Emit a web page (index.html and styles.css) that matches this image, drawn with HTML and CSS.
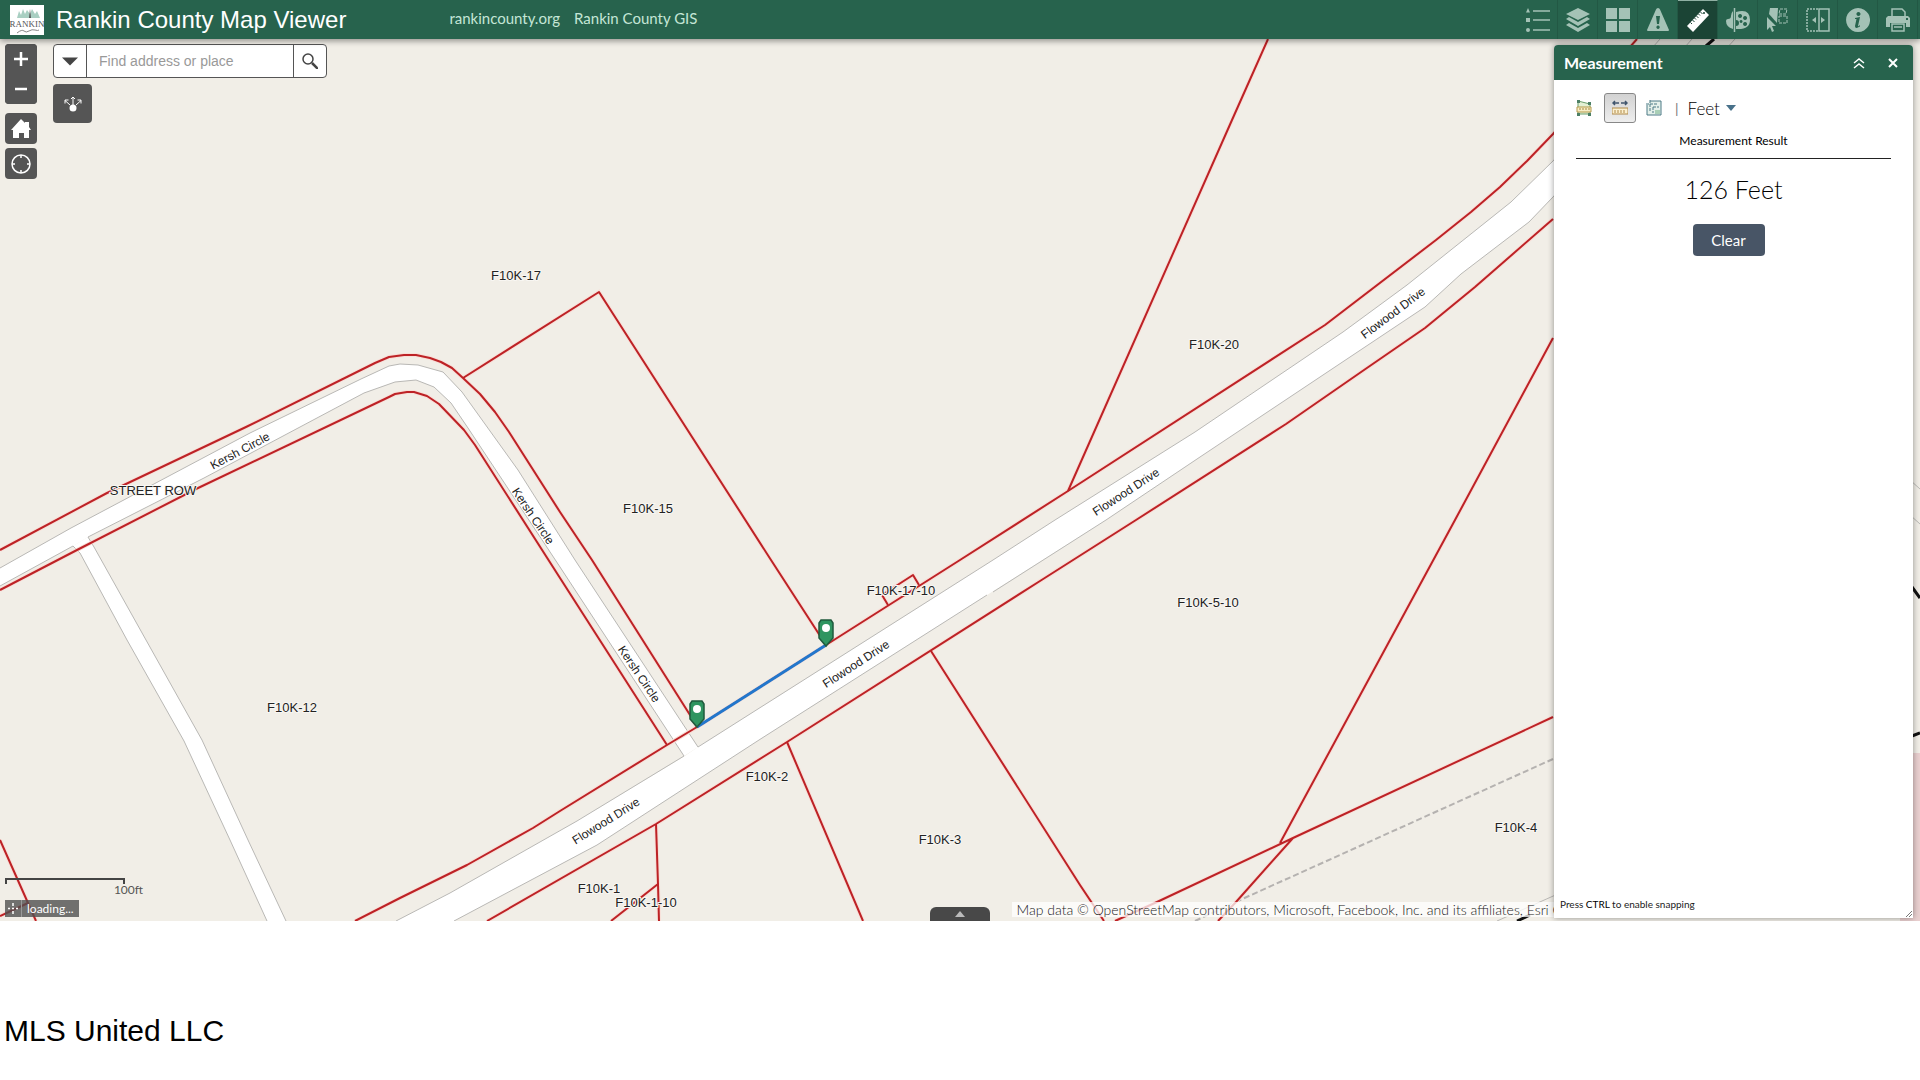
FILE: index.html
```html
<!DOCTYPE html>
<html lang="en">
<head>
<meta charset="utf-8">
<meta name="viewport" content="width=device-width, initial-scale=1">
<title>Rankin County Map Viewer</title>
<link rel="stylesheet" href="styles.css">
</head>
<body>
<header class="topbar">
  <svg class="logo" viewBox="0 0 34 30" aria-hidden="true">
    <rect width="34" height="30" fill="#fff"/>
    <path d="M7 13l2-7 2 4 2-6 2 5 2-4 3 4 2-5 3 5 2-3 3 7z" fill="#a9cfc2"/>
    <path d="M19 13l1-9 1 9z" fill="#555"/>
    <text x="17" y="22" class="logo-text">RANKIN</text>
    <path d="M7 28q5-4 7-2t5 0 6-1 4 0" fill="none" stroke="#888" stroke-width="1"/>
  </svg>
  <h1 class="title">Rankin County Map Viewer</h1>
  <nav class="links">
    <a href="#org">rankincounty.org</a>
    <a href="#gis">Rankin County GIS</a>
  </nav>
  <div class="widgets">
    <button class="widget" type="button" aria-label="Legend"><svg viewBox="0 0 24 24"><path d="M0 4.500L2 0l2 4.500zM0 10h4v4H0z" fill="currentColor"/><circle cx="2" cy="22" r="2" fill="currentColor"/><path d="M7 3h17M7 12h17M7 22h17" stroke="currentColor" stroke-width="1.500"/></svg></button>
    <button class="widget" type="button" aria-label="Layers"><svg viewBox="0 0 24 24"><path d="M12 0l12 6-12 6L0 6z" fill="currentColor"/><path d="M0 11l3-2 9 5 9-5 3 2-12 7zM0 17l3-2 9 5 9-5 3 2-12 7z" fill="currentColor"/></svg></button>
    <button class="widget" type="button" aria-label="Basemap gallery"><svg viewBox="0 0 24 24"><path d="M0 0h11v11H0zM13 0h11v11H13zM0 13h11v11H0zM13 13h11v11H13z" fill="currentColor"/></svg></button>
    <button class="widget" type="button" aria-label="Report"><svg viewBox="0 0 24 24"><path fill-rule="evenodd" d="M12 0q1.500 0 2 1.500L23 22q0 1-1 1H2q-1 0-1-1L10 1.500Q10.500 0 12 0zM10 8l1 8h2l1-8zM12 17.500a1.700 1.700 0 1 0 .1 0z" fill="currentColor"/></svg></button>
    <button class="widget active" type="button" aria-label="Measurement"><svg viewBox="0 0 24 24"><path d="M17 1l6 6L7 24l-6-6z" fill="currentColor"/><path d="M14.500 4l2 2M12.500 6l1.500 1.500M10.500 8l2 2M8.500 10l1.500 1.500M6.500 12l2 2M4.500 14.500L6 16" stroke="#1b4435" stroke-width="1"/><circle cx="18" cy="5" r="1" fill="#1b4435"/></svg></button>
    <button class="widget" type="button" aria-label="Draw"><svg viewBox="0 0 24 24"><path d="M7 3v18Q0 19 0 13q0-2 2-2 3 0 3-3 0-3 2-5z" fill="currentColor"/><path d="M8.500 0v24" stroke="currentColor" stroke-width="1.500"/><path fill-rule="evenodd" d="M10 4q14-4 14 8 0 10-14 9v-3q3 0 3-3t-3-3zM14 6a2 2 0 1 0 .1 0zM19 8a2 2 0 1 0 .1 0zM19 14a2 2 0 1 0 .1 0zM15 12a1.500 1.500 0 1 0 .1 0z" fill="currentColor"/></svg></button>
    <button class="widget" type="button" aria-label="Select"><svg viewBox="0 0 24 24"><path d="M4 0h8l-1 15-8-9z" fill="currentColor"/><path d="M14 1h7l-1 5h-7zM13 8h8v7h-8z" fill="none" stroke="currentColor" stroke-width="1" stroke-dasharray="3 1"/><path d="M1 9v13l3-3 2 5 2-1-2-5h4z" fill="currentColor"/></svg></button>
    <button class="widget" type="button" aria-label="Swipe"><svg viewBox="0 0 24 24"><path d="M12 1H1v22h11" fill="none" stroke="currentColor" stroke-width="1.500" stroke-dasharray="2 1"/><path d="M13 1h10v22H13z" fill="none" stroke="currentColor" stroke-width="1.500"/><path d="M6 12l4-3v6zM19 12l-4-3v6z" fill="currentColor"/></svg></button>
    <button class="widget" type="button" aria-label="About"><svg viewBox="0 0 24 24"><path fill-rule="evenodd" d="M12 0a12 12 0 1 0 .1 0zM12.500 4a2 2 0 1 1-.1 0zM9 10l5-1-2 9q0 1 2-1v1.500q-5 3-5-.5l1.500-7H9z" fill="currentColor"/></svg></button>
    <button class="widget" type="button" aria-label="Print"><svg viewBox="0 0 24 24"><path d="M6 9V1h10l3 3v5" fill="none" stroke="currentColor" stroke-width="1.500"/><path fill-rule="evenodd" d="M2 8h20l2 2v9h-4v-4H4v4H0v-9zM20 10v2h2v-2z" fill="currentColor"/><path d="M6 16h12v7H6zM8 19h8" fill="none" stroke="currentColor" stroke-width="1.500"/></svg></button>
  </div>
</header>

<main class="map">
  <svg class="canvas" viewBox="0 39 1920 882" role="img" aria-label="Parcel map">
    <defs>
      <g id="parcels">
        <path d="M0 550L107 493 246 427 375 363 389 357 404 355 416 355 430 358 441 362 452 368 463 378 480 394 495 412 509 432 560 512 592 560 690 715 697 727"/>
        <path d="M0 590L77 550 196 489 389 397 395 394 407 392 414 392 427 396 439 404 464 430 475 445 560 578 667 745"/>
        <path d="M463 378L599 292 771 560 826 645"/>
        <path d="M355 921L400 898 467 865 533 828 560 811 667 745 697 727 826 645 960 560 1068 491 1325 325 1436 240 1471 212 1500 187 1527 161 1553 134 1637 39"/>
        <path d="M487 921L656 824 787 742 1040 581 1136 520 1286 424 1364 370 1425 328 1475 287 1553 219"/>
        <path d="M1068 491L1232 120 1268 39M888 605L882 595 913 575 919 585"/>
        <path d="M931 651L1080 885 1104 921M787 742L863 921M656 824L658 884 659 921M658 884L611 921"/>
        <path d="M1553 338L1455 520 1390 640 1280 843M1553 717L1293 838 1157 902 1115 921M1293 838L1236 902 1218 921"/>
        <path d="M0 840L28 903 36 921M0 916L28 903"/>
      </g>
    </defs>
    <rect y="39" width="1920" height="882" fill="#f1eee7"/>
    <rect x="1900" y="753" width="20" height="168" fill="#e9cfcf"/>
    <g class="road-fill">
      <path d="M73 546L80 553 127 640 184 741 230 840 267 921H286L248 840 202 740 146 640 94 547 88 537z"/>
      <path d="M0 568L71 528 250 433 361 379 389 366 400 364 418 365 443 372 462 392 518 470 575 560 698 747 684 756 560 567 468 428 451 403 434 387 416 380 395 382 364 393 204 478 88 537 73 546 0 586z"/>
      <path d="M396 921L450 893 577 821 685 756 698 747 993 560 1055 520 1195 432 1343 332 1407 285 1511 202 1553 161 1660 45 1690 45 1553 197 1529 222 1461 274 1425 307 1200 457 1106 520 987 595 759 740 597 845 454 921z"/>
    </g>
    <g class="road-edge">
      <path d="M0 568L71 528 250 433 361 379 389 366 400 364 418 365 443 372 462 392 518 470 575 560 698 747 993 560 1055 520 1195 432 1343 332 1407 285 1511 202 1553 161 1660 39"/>
      <path d="M0 586L73 546M88 537L204 478 364 393 395 382 416 380 434 387 451 403 468 428 560 567 684 756 577 821 450 893 396 921"/>
      <path d="M454 921L597 845 759 740 987 595M993 592L1106 520 1200 457 1425 307 1461 274 1529 222 1553 197 1692 39"/>
      <path d="M73 546L80 553 127 640 184 741 230 840 267 921M88 537L94 547 146 640 202 740 248 840 286 921"/>
      <path d="M1497 921L1560 893M1725 50L1735 39M1910 480L1920 489M1910 515L1920 524"/>
    </g>
    <path class="trail" d="M1553 759L1240 900 1195 921"/>
    <use href="#parcels" class="halo"/>
    <use href="#parcels" class="line"/>
    <path d="M1517 921L1530 915M1706 46L1714 39M1912 587L1920 598M1912 736L1920 733" stroke="#111" stroke-width="3"/>
    <g class="parcel-label">
      <text x="516" y="280">F10K-17</text>
      <text x="1214" y="349">F10K-20</text>
      <text x="648" y="513">F10K-15</text>
      <text x="901" y="595">F10K-17-10</text>
      <text x="1208" y="607">F10K-5-10</text>
      <text x="292" y="712">F10K-12</text>
      <text x="767" y="781">F10K-2</text>
      <text x="940" y="844">F10K-3</text>
      <text x="1516" y="832">F10K-4</text>
      <text x="599" y="893">F10K-1</text>
      <text x="646" y="907">F10K-1-10</text>
      <text x="153" y="495">STREET ROW</text>
    </g>
    <g class="street-label">
      <text transform="translate(240 451) rotate(-28)" y="4">Kersh Circle</text>
      <text transform="translate(533 516) rotate(56)" y="4">Kersh Circle</text>
      <text transform="translate(639 674) rotate(56)" y="4">Kersh Circle</text>
      <text transform="translate(606 821) rotate(-32)" y="4">Flowood Drive</text>
      <text transform="translate(856 664) rotate(-33)" y="4">Flowood Drive</text>
      <text transform="translate(1126 492) rotate(-33)" y="4">Flowood Drive</text>
      <text transform="translate(1393 313) rotate(-37)" y="4">Flowood Drive</text>
    </g>
    <path d="M697 727L826 645" stroke="#2277cc" stroke-width="3"/>
    <g fill="#2f9560" stroke="#1f5a3d" stroke-width="1.500">
      <path d="M692 701h10l2 3v15l-7 8-7-8v-15z"/>
      <path d="M821 620h10l2 3v15l-7 8-7-8v-15z"/>
      <circle cx="697" cy="709" r="4" fill="#fff" stroke="none"/>
      <circle cx="826" cy="628" r="4" fill="#fff" stroke="none"/>
    </g>
  </svg>

  <div class="controls">
    <div class="nav">
      <div class="zoom">
        <button class="dark" type="button" aria-label="Zoom in"><svg viewBox="0 0 16 16"><path d="M8 1v14M1 8h14" stroke="#fff" stroke-width="2.500"/></svg></button>
        <button class="dark" type="button" aria-label="Zoom out"><svg viewBox="0 0 16 16"><path d="M2 8h12" stroke="#fff" stroke-width="2.500"/></svg></button>
      </div>
      <button class="dark square" type="button" aria-label="Home"><svg viewBox="0 0 20 20"><path d="M10 0l4 4V3h4v5l2 3h-2v8h-5v-5H8v5H2v-8H0z" fill="#fff"/></svg></button>
      <button class="dark square" type="button" aria-label="My location"><svg viewBox="0 0 20 20"><circle cx="10" cy="10" r="9" fill="none" stroke="#fff" stroke-width="1.500"/><path d="M10 1v3M10 16v3M1 10h3M16 10h3" stroke="#fff" stroke-width="1.500"/></svg></button>
    </div>
    <div class="find">
      <form class="search">
        <button type="button" aria-label="Search source"><svg viewBox="0 0 14 14"><path d="M0 4h14l-7 7z" fill="#444"/></svg></button>
        <input type="text" aria-label="Find address or place" placeholder="Find address or place">
        <button type="submit" aria-label="Search"><svg viewBox="0 0 16 16"><circle cx="6" cy="6" r="5" fill="none" stroke="#444" stroke-width="1.500"/><path d="M10 10l6 6" stroke="#444" stroke-width="2.500"/></svg></button>
      </form>
      <button class="dark share" type="button" aria-label="Share"><svg viewBox="0 0 18 16"><circle cx="9" cy="12" r="3.500" fill="#fff"/><path d="M9 9V1M7 3l2-2 2 2M6 9L1 4.500M1 7.500V4h3.500M12 9l5-4.500M17 7.500V4h-3.500" fill="none" stroke="#fff" stroke-width="1"/></svg></button>
    </div>
  </div>

  <div class="status">
    <div class="scale"><span class="scale-bar"></span><span class="scale-text">100ft</span></div>
    <div class="loading"><svg viewBox="0 0 16 17"><path d="M8 3v3M8 11v3M3 8.500h2M11 8.500h2M7 8.500h2" stroke="#fff" stroke-width="1.500"/></svg><span>loading...</span></div>
  </div>
  <button class="drawer" type="button" aria-label="Open attribute table"><svg viewBox="0 0 10 6"><path d="M0 6l5-6 5 6z" fill="#bbb"/></svg></button>
  <div class="attribution">Map data © OpenStreetMap contributors, Microsoft, Facebook, Inc. and its affiliates, Esri C</div>

  <section class="panel">
    <div class="panel-head">
      <h2>Measurement</h2>
      <button type="button" aria-label="Collapse"><svg viewBox="0 0 12 12"><path d="M1 6l5-4 5 4M1 11l5-4 5 4" fill="none" stroke="#fff" stroke-width="1.500"/></svg></button>
      <button type="button" aria-label="Close"><svg viewBox="0 0 12 12"><path d="M2 2l8 8M10 2l-8 8" stroke="#fff" stroke-width="2"/></svg></button>
    </div>
    <div class="panel-body">
      <div class="tools">
        <button type="button" aria-label="Area"><svg viewBox="0 0 16 16"><path d="M2 1l12 3v10H2z" fill="#e4f0d4" stroke="#6c9f6c"/><path d="M1 7h14v5H1z" fill="#f7edc6" stroke="#b59a4c"/><path d="M4 8v2M7 8v2M10 8v2M13 8v2" stroke="#a58b3e"/><path d="M1 0h3v3H1zM12 2h3v3h-3zM1 13h3v3H1zM12 13h3v3h-3z" fill="#4d8066"/></svg></button>
        <button class="selected" type="button" aria-label="Distance"><svg viewBox="0 0 16 16"><path d="M1 3h6M9 3h6M3 1L1 3l2 2M13 1l2 2-2 2" fill="none" stroke="#41566e" stroke-width="1.500"/><path d="M0 8h16v6H0z" fill="#fbf0cf" stroke="#b08a4a"/><path d="M3 10v3M6 10v3M9 10v3M12 10v3" stroke="#b08a4a"/></svg></button>
        <button type="button" aria-label="Location"><svg viewBox="0 0 16 16"><path d="M4 1h11v14H1V5" fill="#e4f0ea" stroke="#4d7a86"/><path d="M4 0v12M0 4h12M7 7v6M7 7h6" stroke="#4d7a86" stroke-dasharray="3 1" fill="none"/><path d="M9 10h5v4H9z" fill="#a9cfb6"/></svg></button>
        <span class="divider">|</span>
        <label class="unit">
          <select aria-label="Unit"><option>Feet</option></select>
          <svg viewBox="0 0 10 6"><path d="M0 0h10L5 6z" fill="#48718a"/></svg>
        </label>
      </div>
      <h3>Measurement Result</h3>
      <output class="result">126 Feet</output>
      <button class="clear" type="button">Clear</button>
    </div>
    <p class="hint">Press <b>CTRL</b> to enable snapping</p>
    <svg class="grip" viewBox="0 0 8 8"><path d="M1 7l6-6M4 7l3-3" stroke="#777" fill="none"/></svg>
  </section>
</main>
<footer class="credit">MLS United LLC</footer>
</body>
</html>
```
FILE: styles.css
```css
* { box-sizing: border-box; }
body { margin: 0; background: #fff; font-family: Lato, "Liberation Sans", sans-serif; color: #222; }
button { border: 0; padding: 0; margin: 0; background: none; font: inherit; display: flex; align-items: center; justify-content: center; }
h1, h2, h3, p { margin: 0; }

.topbar { position: relative; z-index: 1; display: flex; align-items: center; height: 39px; padding: 0 2px 0 10px; background: #27634d; box-shadow: 0 2px 6px rgba(0, 0, 0, .4); }
.logo { width: 34px; height: 30px; margin-right: 12px; }
.logo-text { font: 9px "Liberation Serif", serif; fill: #555; text-anchor: middle; }
.title { font: 24px/36px "Liberation Sans", Arial, sans-serif; color: #fff; white-space: nowrap; }
.links { display: flex; gap: 14px; margin-left: 103px; font-size: 15px; line-height: 36px; height: 39px; white-space: nowrap; }
.links a { color: #c4e6d6; text-decoration: none; }
.widgets { display: flex; margin-left: auto; }
.widget { width: 40px; height: 39px; color: #a4c2b6; border-right: 1px solid #225844; }
.widget svg { width: 24px; height: 24px; }
.widget.active { background: #1b4435; color: #fff; border-top: 1px solid #8fb0a3; }

.map { position: relative; overflow: hidden; }
.canvas { display: block; width: 100%; height: auto; }
.road-fill { fill: #fff; }
.road-edge { fill: none; stroke: #b9b8b5; stroke-width: 1; }
.trail { fill: none; stroke: #b5b2b0; stroke-width: 2; stroke-dasharray: 6 3; }
.halo { fill: none; stroke: #f8dfd8; stroke-width: 4; }
.line { fill: none; stroke: #bd2226; stroke-width: 2; stroke-linejoin: round; }
.parcel-label, .street-label { font-family: "Liberation Sans", Arial, sans-serif; text-anchor: middle; fill: #222; stroke: #fff; stroke-width: 2; paint-order: stroke; }
.parcel-label { font-size: 13px; stroke: #f8f6f2; }
.street-label { font-size: 12px; }

.controls { position: absolute; top: 5px; left: 5px; display: flex; gap: 16px; align-items: flex-start; }
.nav { display: flex; flex-direction: column; gap: 4px; }
.dark { background: #555; border-radius: 4px; }
.zoom { margin-bottom: 5px; border-radius: 4px; background: #555; }
.zoom button { width: 32px; height: 30px; }
.zoom svg { width: 16px; height: 16px; }
.square { width: 32px; height: 31px; }
.square svg { width: 20px; height: 20px; }
.find { display: flex; flex-direction: column; gap: 6px; }
.search { display: flex; height: 34px; background: #fff; border: 1px solid #555; border-radius: 4px; }
.search button { width: 32px; }
.search svg { width: 16px; height: 16px; }
.search input { width: 208px; border: solid #555; border-width: 0 1px; padding: 0 12px; background: none; font: 14px "Liberation Sans", Arial, sans-serif; }
.search input::placeholder { color: #999; }
.share { width: 39px; height: 39px; }
.share svg { width: 18px; height: 16px; }

.status { position: absolute; left: 5px; bottom: 4px; display: flex; flex-direction: column; align-items: flex-start; gap: 4px; }
.scale { display: flex; flex-direction: column; width: 138px; }
.scale-bar { width: 120px; height: 6px; border: 2px solid #444; border-bottom: 0; }
.scale-text { font-size: 12px; line-height: 12px; align-self: flex-end; color: #555; }
.loading { display: flex; align-items: center; height: 17px; background: rgba(80, 80, 80, .8); color: #fff; font-size: 12px; padding-right: 5px; }
.loading svg { width: 17px; height: 17px; border-right: 1px solid #999; margin-right: 5px; }
.drawer { position: absolute; left: 50%; bottom: 0; transform: translateX(-50%); width: 60px; height: 14px; background: #484848; border-radius: 6px 6px 0 0; }
.drawer svg { width: 10px; height: 6px; }
.attribution { position: absolute; right: 358px; bottom: 4px; padding-left: 5px; height: 15px; background: rgba(255, 255, 255, .75); font-size: 14px; font-weight: 300; line-height: 15px; color: #222; white-space: nowrap; }

.panel { position: absolute; top: 6px; right: 7px; bottom: 3px; width: 359px; display: flex; flex-direction: column; background: #fff; border-radius: 4px 4px 0 0; box-shadow: 0 0 6px rgba(0, 0, 0, .4); overflow: hidden; }
.panel-head { display: flex; align-items: center; gap: 22px; height: 35px; padding: 0 14px 0 10px; background: #27634d; color: #fff; }
.panel-head h2 { flex: 1; font-size: 16px; line-height: 20px; font-weight: 700; }
.panel-head svg { width: 12px; height: 12px; }
.panel-body { flex: 1; display: flex; flex-direction: column; align-items: stretch; padding: 13px 22px; }
.tools { display: flex; align-items: center; height: 30px; }
.tools button { width: 32px; height: 30px; margin-right: 2px; }
.tools button:first-child { width: 16px; margin-right: 12px; }
.tools svg { width: 16px; height: 16px; }
.tools .selected { border: 1px solid #888; border-radius: 3px; background: linear-gradient(#d2d2d2, #eee); }
.divider { color: #777; font-size: 14px; margin: 0 9px 0 3px; }
.unit { display: flex; align-items: center; }
.unit select { appearance: none; border: 0; padding: 0; margin: 0; width: 38px; background: none; font: 300 17px Lato, sans-serif; color: #000; }
.unit .arrow, .unit svg { width: 10px; height: 6px; }
.panel-body h3 { font-size: 12px; line-height: 16px; font-weight: 400; text-align: center; color: #000; padding: 10px 0 9px; border-bottom: 1px solid #222; }
.result { margin-top: 14px; font-size: 25px; line-height: 32px; font-weight: 300; text-align: center; color: #000; }
.clear { align-self: center; width: 72px; height: 32px; margin: 19px 10px 0 0; border-radius: 4px; background: #485566; color: #fff; font-size: 15px; }
.hint { padding: 0 6px 7px; font-size: 10px; line-height: 14px; }
.hint b { font-weight: 400; color: #000; }
.grip { position: absolute; right: 0; bottom: 0; width: 8px; height: 8px; }

.credit { padding: 92px 4px 31px; font: 30px/36px "Liberation Sans", Arial, sans-serif; color: #000; }
```
